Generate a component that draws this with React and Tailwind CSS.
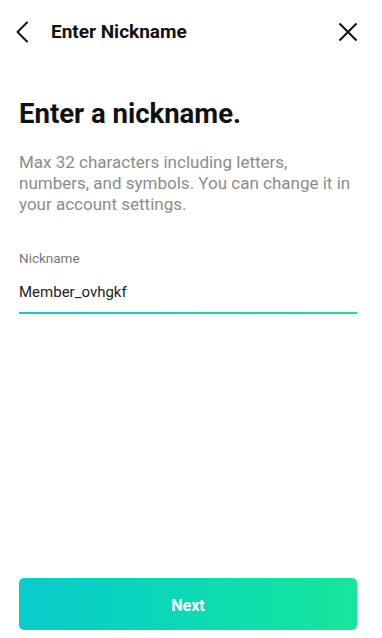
import React, { useState } from 'react';

const App = () => {
    const [nickname, setNickname] = useState('Member_ovhgkf');

    return (
        <div className="w-[382px] h-[638px] bg-white flex flex-col font-[Roboto,sans-serif]">
            {/* header */}
            <div className="h-[64px] flex items-center pl-[11px] pr-[22px] shrink-0">
                <button className="w-6 h-6 flex items-center justify-center text-[#111]">
                    <svg width="24" height="24" viewBox="0 0 24 24" fill="none" stroke="currentColor" strokeWidth="2" strokeLinecap="round" strokeLinejoin="round">
                        <path d="M16 2.5 L6.5 12 L16 21.5" />
                    </svg>
                </button>
                <h1 className="ml-[16px] text-[19px] font-bold text-[#111]">Enter Nickname</h1>
                <button className="ml-auto w-6 h-6 flex items-center justify-center text-[#111]">
                    <svg width="24" height="24" viewBox="0 0 24 24" fill="none" stroke="currentColor" strokeWidth="2">
                        <path d="M3.5 3.5 L20.5 20.5 M20.5 3.5 L3.5 20.5" />
                    </svg>
                </button>
            </div>

            <div className="pl-[19px] pr-[25px] flex-1 flex flex-col">
                <h2 className="mt-[32px] text-[27.5px] leading-[36px] font-bold text-[#111]">Enter a nickname.</h2>
                <p className="mt-[20px] text-[17px] leading-[21px] text-[#8c8c8c]">
                    Max 32 characters including letters, numbers, and symbols. You can change it in your account settings.
                </p>

                <label className="mt-[33px] text-[13.5px] text-[#777]">Nickname</label>
                <div className="mt-[12px]">
                    <input
                        value={nickname}
                        onChange={(e) => setNickname(e.target.value)}
                        className="w-full bg-transparent outline-none text-[15px] leading-[24px] text-[#222] pb-[8px]"
                    />
                    <div className="h-[2px] bg-gradient-to-r from-[#0bcbcc] to-[#16e39b]" />
                </div>

                <div className="flex-1" />

                <button className="mb-[8px] h-[52px] w-full rounded-[5px] bg-gradient-to-r from-[#0bcbcc] to-[#17e69a] text-white text-[16px] font-bold pt-[3px]">
                    Next
                </button>
            </div>
        </div>
    );
};

export default App;
